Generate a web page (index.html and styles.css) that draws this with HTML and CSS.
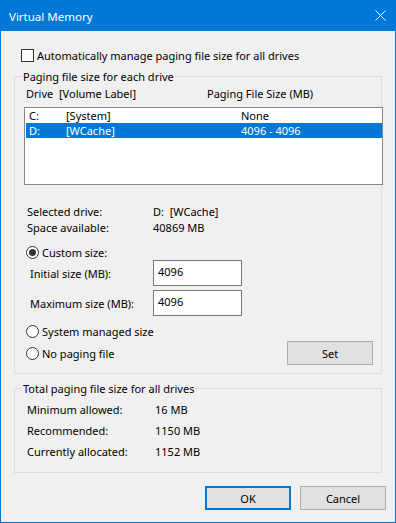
FILE: index.html
```html
<!DOCTYPE html>
<html>
<head>
<meta charset="utf-8">
<title>Virtual Memory</title>
<link rel="stylesheet" href="styles.css">
</head>
<body>
<div class="window">
  <div class="titlebar">
    <span class="title">Virtual Memory</span>
    <svg class="close" width="11" height="11" viewBox="0 0 11 11"><path d="M0.5 0.5 L10.5 10.5 M10.5 0.5 L0.5 10.5" stroke="#fff" stroke-width="1" fill="none"/></svg>
  </div>
  <div class="client">
    <div class="check-row"><span class="checkbox"></span><span>Automatically manage paging file size for all drives</span></div>

    <div class="group g1">
      <div class="group-title">Paging file size for each drive</div>
      <div class="list-head"><span class="h-drive">Drive</span><span class="h-label">[Volume Label]</span><span>Paging File Size (MB)</span></div>
      <div class="listbox">
        <div class="row"><span class="r-drive">C:</span><span class="r-label">[System]</span><span>None</span></div>
        <div class="row sel"><span class="r-drive">D:</span><span class="r-label">[WCache]</span><span>4096 - 4096</span></div>
      </div>
      <div class="info first"><span class="k">Selected drive:</span><span class="pre">D:  [WCache]</span></div>
      <div class="info"><span class="k">Space available:</span><span>40869 MB</span></div>
      <div class="radio-row custom">
        <svg class="radio" width="13" height="13" viewBox="0 0 13 13"><circle cx="6.5" cy="6.5" r="6" fill="#fff" stroke="#333"/><circle cx="6.5" cy="6.5" r="3.5" fill="#333"/></svg>
        <span>Custom size:</span>
      </div>
      <div class="field"><span class="k2">Initial size (MB):</span><div class="input">4096</div></div>
      <div class="field max"><span class="k2">Maximum size (MB):</span><div class="input">4096</div></div>
      <div class="radio-row sys">
        <svg class="radio" width="13" height="13" viewBox="0 0 13 13"><circle cx="6.5" cy="6.5" r="6" fill="#fff" stroke="#333"/></svg>
        <span>System managed size</span>
      </div>
      <div class="radio-row last">
        <svg class="radio" width="13" height="13" viewBox="0 0 13 13"><circle cx="6.5" cy="6.5" r="6" fill="#fff" stroke="#333"/></svg>
        <span>No paging file</span>
        <div class="btn set">Set</div>
      </div>
    </div>

    <div class="group g2">
      <div class="group-title">Total paging file size for all drives</div>
      <div class="stat first"><span class="k3">Minimum allowed:</span><span>16 MB</span></div>
      <div class="stat"><span class="k3">Recommended:</span><span>1150 MB</span></div>
      <div class="stat"><span class="k3">Currently allocated:</span><span>1152 MB</span></div>
    </div>

    <div class="buttons">
      <div class="btn ok">OK</div>
      <div class="btn">Cancel</div>
    </div>
  </div>
</div>
</body>
</html>
```
FILE: styles.css
```css
html, body {
  margin: 0;
  padding: 0;
}
body {
  font-family: "Noto Sans", "DejaVu Sans", sans-serif;
  font-size: 11px;
  color: #000;
  background: #f0f0f0;
}
.window {
  width: 396px;
  height: 523px;
  box-sizing: border-box;
  border: 1px solid #0078d7;
  background: #f0f0f0;
  display: flex;
  flex-direction: column;
}
.titlebar {
  height: 30px;
  flex: none;
  background: #0078d7;
  color: #fff;
  display: flex;
  align-items: center;
  padding-left: 8px;
}
.title {
  font-size: 11.5px;
}
.close {
  margin-left: auto;
  margin-right: 9px;
  margin-top: -1px;
}
.client {
  flex: 1;
  padding: 0 13px;
}
.check-row {
  display: flex;
  align-items: center;
  gap: 3px;
  height: 13px;
  margin: 18px 0 0 7px;
}
.checkbox {
  width: 13px;
  height: 13px;
  box-sizing: border-box;
  border: 1px solid #333;
  background: #fff;
  flex: none;
}
.group {
  border: 1px solid #dcdcdc;
  margin-top: 14px;
}
.group-title {
  width: max-content;
  margin: -8px 0 0 7px;
  padding: 0 1px;
  background: #f0f0f0;
  height: 16px;
  line-height: 16px;
}
.g1 {
  padding-bottom: 8px;
}
.list-head {
  display: flex;
  height: 16px;
  line-height: 16px;
  margin-top: 1px;
  padding-left: 11px;
}
.h-drive { width: 33px; }
.h-label { width: 148px; }
.listbox {
  margin: 5px 0 0 9px;
  width: 359px;
  height: 78px;
  box-sizing: border-box;
  border: 1px solid #828790;
  background: #fff;
  padding-left: 1px;
}
.row {
  display: flex;
  height: 15px;
  line-height: 15px;
  padding-left: 3px;
}
.row.sel {
  background: #0078d7;
  color: #fff;
}
.r-drive { width: 37px; }
.r-label { width: 175px; }
.info {
  display: flex;
  height: 16px;
  line-height: 16px;
  padding-left: 12px;
}
.info.first { margin-top: 19px; }
.k { width: 126px; }
.pre { white-space: pre; }
.radio-row {
  display: flex;
  align-items: center;
  gap: 3px;
  height: 15px;
  padding-left: 11px;
}
.radio { flex: none; }
.custom { margin-top: 9px; }
.sys { margin-top: 8px; }
.last {
  height: 24px;
  margin-top: 2px;
}
.field {
  display: flex;
  align-items: center;
  height: 26px;
  padding-left: 15px;
}
.field.max { margin-top: 4px; }
.k2 { width: 123px; }
.input {
  width: 89px;
  height: 26px;
  box-sizing: border-box;
  border: 1px solid #7a7a7a;
  background: #fff;
  padding-left: 4px;
  line-height: 21px;
}
.btn {
  width: 86px;
  height: 24px;
  box-sizing: border-box;
  border: 1px solid #adadad;
  background: #e1e1e1;
  display: flex;
  align-items: center;
  justify-content: center;
}
.set {
  margin-left: auto;
  margin-right: 8px;
}
.g2 {
  padding-bottom: 10px;
}
.stat {
  display: flex;
  align-items: center;
  height: 21px;
  padding-left: 12px;
}
.stat.first { margin-top: 2px; }
.k3 { width: 128px; }
.buttons {
  display: flex;
  justify-content: flex-end;
  gap: 9px;
  margin: 13px -4px 0 0;
}
.btn.ok {
  border: 2px solid #0078d7;
}
```
